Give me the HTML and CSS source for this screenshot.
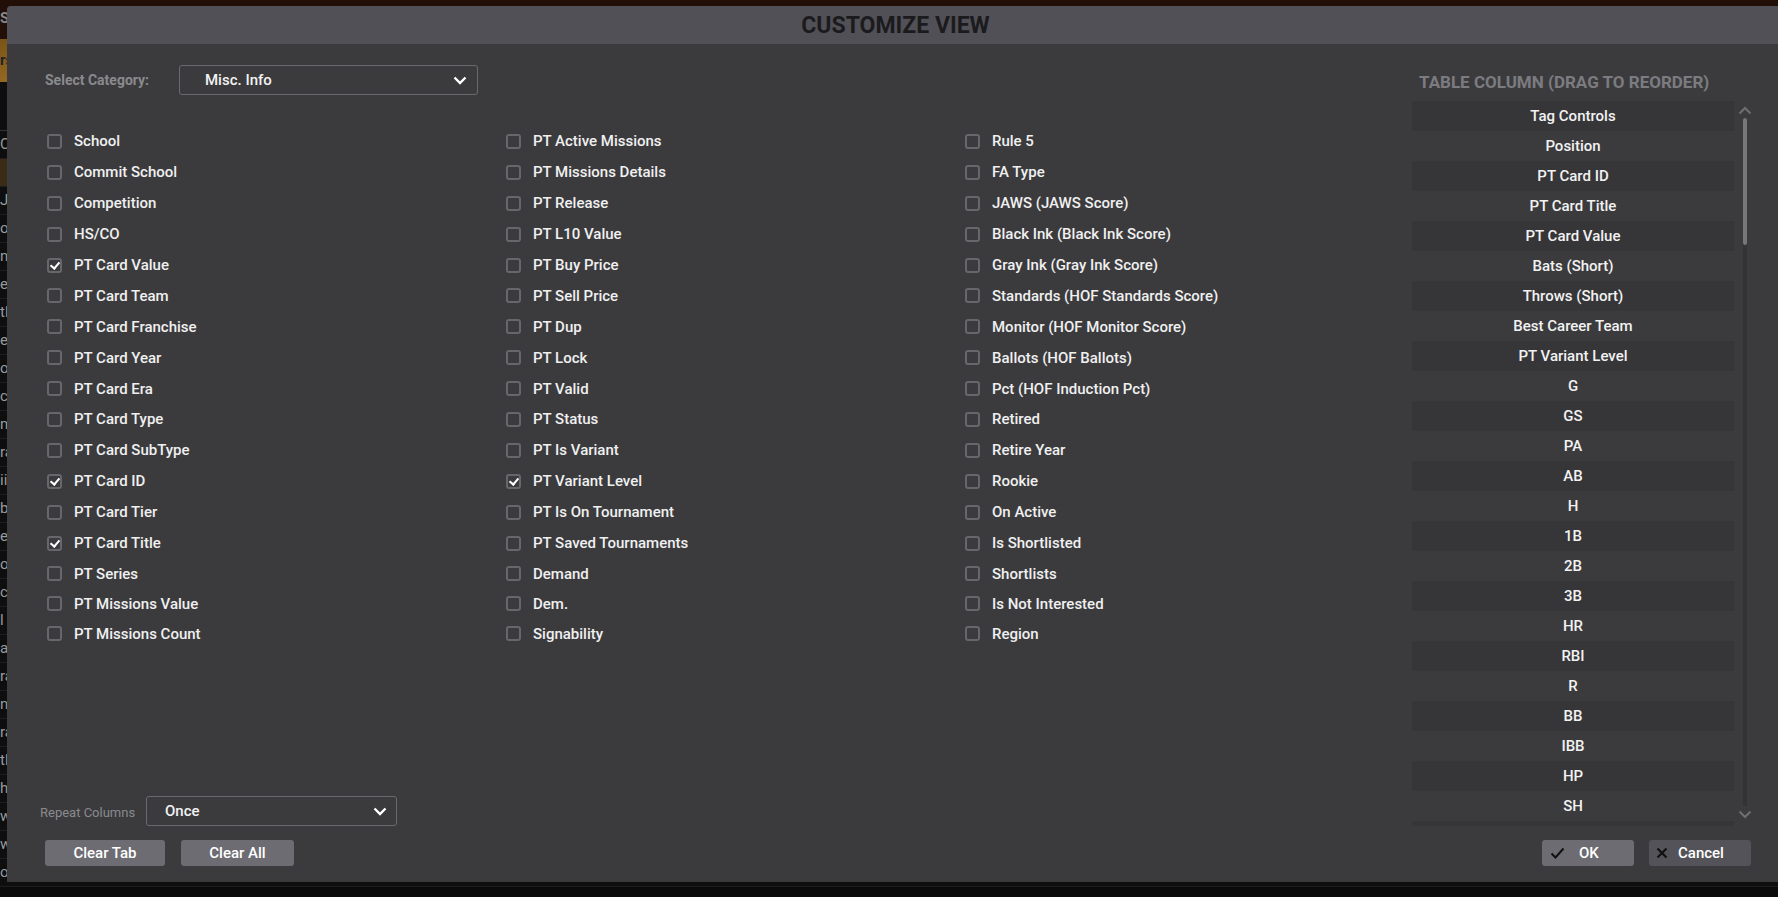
FILE: index.html
```html
<!DOCTYPE html>
<html lang="en">
<head>
    <meta charset="UTF-8">
    <title>Customize View</title>
    <link rel="stylesheet" href="styles.css">
</head>
<body>
    <div class="app">
        <div class="app-top">Stats</div>
        <div class="app-band">rs</div>
        <div class="app-gap"></div>
        <div class="app-row">Co</div>
        <div class="app-row sel"></div>
        <div class="app-row">Ju</div>
        <div class="app-row">o</div>
        <div class="app-row">nn</div>
        <div class="app-row">e</div>
        <div class="app-row">tl</div>
        <div class="app-row">e</div>
        <div class="app-row">o</div>
        <div class="app-row">c</div>
        <div class="app-row">m</div>
        <div class="app-row">ra</div>
        <div class="app-row">ii</div>
        <div class="app-row">b</div>
        <div class="app-row">e</div>
        <div class="app-row">or</div>
        <div class="app-row">c</div>
        <div class="app-row">l</div>
        <div class="app-row">a</div>
        <div class="app-row">ra</div>
        <div class="app-row">nt</div>
        <div class="app-row">ra</div>
        <div class="app-row">tl</div>
        <div class="app-row">h</div>
        <div class="app-row">w</div>
        <div class="app-row">w</div>
        <div class="app-row">o</div>
    </div>

    <div class="dialog">
        <div class="dialog-title">CUSTOMIZE VIEW</div>
        <div class="dialog-body">
            <div class="main">
                <div class="category-row">
                    <span class="category-label">Select Category:</span>
                    <div class="select category-select">
                        <span>Misc. Info</span>
                        <svg class="chev" width="14" height="9" viewBox="0 0 14 9"><path d="M1.5 1.5 L7 7 L12.5 1.5" fill="none" stroke="#fff" stroke-width="2.4"/></svg>
                    </div>
                </div>

                <div class="check-grid">
                    <label class="check"><span class="box"></span>School</label>
                    <label class="check"><span class="box"></span>Commit School</label>
                    <label class="check"><span class="box"></span>Competition</label>
                    <label class="check"><span class="box"></span>HS/CO</label>
                    <label class="check"><span class="box on"></span>PT Card Value</label>
                    <label class="check"><span class="box"></span>PT Card Team</label>
                    <label class="check"><span class="box"></span>PT Card Franchise</label>
                    <label class="check"><span class="box"></span>PT Card Year</label>
                    <label class="check"><span class="box"></span>PT Card Era</label>
                    <label class="check"><span class="box"></span>PT Card Type</label>
                    <label class="check"><span class="box"></span>PT Card SubType</label>
                    <label class="check"><span class="box on"></span>PT Card ID</label>
                    <label class="check"><span class="box"></span>PT Card Tier</label>
                    <label class="check"><span class="box on"></span>PT Card Title</label>
                    <label class="check"><span class="box"></span>PT Series</label>
                    <label class="check"><span class="box"></span>PT Missions Value</label>
                    <label class="check"><span class="box"></span>PT Missions Count</label>

                    <label class="check"><span class="box"></span>PT Active Missions</label>
                    <label class="check"><span class="box"></span>PT Missions Details</label>
                    <label class="check"><span class="box"></span>PT Release</label>
                    <label class="check"><span class="box"></span>PT L10 Value</label>
                    <label class="check"><span class="box"></span>PT Buy Price</label>
                    <label class="check"><span class="box"></span>PT Sell Price</label>
                    <label class="check"><span class="box"></span>PT Dup</label>
                    <label class="check"><span class="box"></span>PT Lock</label>
                    <label class="check"><span class="box"></span>PT Valid</label>
                    <label class="check"><span class="box"></span>PT Status</label>
                    <label class="check"><span class="box"></span>PT Is Variant</label>
                    <label class="check"><span class="box on"></span>PT Variant Level</label>
                    <label class="check"><span class="box"></span>PT Is On Tournament</label>
                    <label class="check"><span class="box"></span>PT Saved Tournaments</label>
                    <label class="check"><span class="box"></span>Demand</label>
                    <label class="check"><span class="box"></span>Dem.</label>
                    <label class="check"><span class="box"></span>Signability</label>

                    <label class="check"><span class="box"></span>Rule 5</label>
                    <label class="check"><span class="box"></span>FA Type</label>
                    <label class="check"><span class="box"></span>JAWS (JAWS Score)</label>
                    <label class="check"><span class="box"></span>Black Ink (Black Ink Score)</label>
                    <label class="check"><span class="box"></span>Gray Ink (Gray Ink Score)</label>
                    <label class="check"><span class="box"></span>Standards (HOF Standards Score)</label>
                    <label class="check"><span class="box"></span>Monitor (HOF Monitor Score)</label>
                    <label class="check"><span class="box"></span>Ballots (HOF Ballots)</label>
                    <label class="check"><span class="box"></span>Pct (HOF Induction Pct)</label>
                    <label class="check"><span class="box"></span>Retired</label>
                    <label class="check"><span class="box"></span>Retire Year</label>
                    <label class="check"><span class="box"></span>Rookie</label>
                    <label class="check"><span class="box"></span>On Active</label>
                    <label class="check"><span class="box"></span>Is Shortlisted</label>
                    <label class="check"><span class="box"></span>Shortlists</label>
                    <label class="check"><span class="box"></span>Is Not Interested</label>
                    <label class="check"><span class="box"></span>Region</label>
                </div>

                <div class="bottom">
                    <div class="repeat-row">
                        <span class="repeat-label">Repeat Columns</span>
                        <div class="select repeat-select">
                            <span>Once</span>
                            <svg class="chev" width="14" height="9" viewBox="0 0 14 9"><path d="M1.5 1.5 L7 7 L12.5 1.5" fill="none" stroke="#fff" stroke-width="2.4"/></svg>
                        </div>
                    </div>
                    <div class="button-row">
                        <button class="btn clear-tab">Clear Tab</button>
                        <button class="btn clear-all">Clear All</button>
                    </div>
                </div>
            </div>

            <div class="side">
                <div class="side-title">TABLE COLUMN (DRAG TO REORDER)</div>
                <div class="list-wrap">
                    <div class="col-list">
                        <div class="col-item">Tag Controls</div>
                        <div class="col-item">Position</div>
                        <div class="col-item">PT Card ID</div>
                        <div class="col-item">PT Card Title</div>
                        <div class="col-item">PT Card Value</div>
                        <div class="col-item">Bats (Short)</div>
                        <div class="col-item">Throws (Short)</div>
                        <div class="col-item">Best Career Team</div>
                        <div class="col-item">PT Variant Level</div>
                        <div class="col-item">G</div>
                        <div class="col-item">GS</div>
                        <div class="col-item">PA</div>
                        <div class="col-item">AB</div>
                        <div class="col-item">H</div>
                        <div class="col-item">1B</div>
                        <div class="col-item">2B</div>
                        <div class="col-item">3B</div>
                        <div class="col-item">HR</div>
                        <div class="col-item">RBI</div>
                        <div class="col-item">R</div>
                        <div class="col-item">BB</div>
                        <div class="col-item">IBB</div>
                        <div class="col-item">HP</div>
                        <div class="col-item">SH</div>
                        <div class="col-item"></div>
                    </div>
                    <div class="scrollbar">
                        <svg class="arrow" width="14" height="9" viewBox="0 0 14 9"><path d="M1.5 7.5 L7 2 L12.5 7.5" fill="none" stroke="#6f6f73" stroke-width="2"/></svg>
                        <div class="track"><div class="thumb"></div></div>
                        <svg class="arrow" width="14" height="9" viewBox="0 0 14 9"><path d="M1.5 1.5 L7 7 L12.5 1.5" fill="none" stroke="#6f6f73" stroke-width="2"/></svg>
                    </div>
                </div>
                <div class="button-row right">
                    <button class="btn ok">
                        <svg width="15" height="12" viewBox="0 0 15 12"><path d="M1.5 6.5 L5.5 10.5 L13.5 1.5" fill="none" stroke="#111" stroke-width="2"/></svg>
                        <span>OK</span>
                    </button>
                    <button class="btn cancel">
                        <svg width="12" height="12" viewBox="0 0 12 12"><path d="M1.5 1.5 L10.5 10.5 M10.5 1.5 L1.5 10.5" fill="none" stroke="#111" stroke-width="2.2"/></svg>
                        <span>Cancel</span>
                    </button>
                </div>
            </div>
        </div>
    </div>
</body>
</html>
```

FILE: styles.css
```css
body {
    margin: 0;
    background-color: #0b0b0b;
    font-family: Roboto, "Liberation Sans", sans-serif;
    overflow: hidden;
    height: 897px;
}

/* app behind the modal */
.app {
    width: 100%;
    color: #9a9a9a;
    font-size: 15px;
}
.app-top {
    height: 39px;
    background: #221008;
    line-height: 36px;
    font-weight: bold;
    color: #888;
}
.app-band {
    height: 43px;
    background: linear-gradient(#7a5418, #946822);
    line-height: 43px;
    font-weight: bold;
    color: #222;
}
.app-gap {
    height: 48px;
    background: #0e0e0e;
    border-bottom: 1px solid #333;
}
.app-row {
    height: 27px;
    line-height: 27px;
    border-bottom: 1px solid #1d1d1d;
    background: #0e0e0e;
}
.app-row.sel {
    background: #3a2c14;
}

/* modal */
.dialog {
    position: absolute;
    left: 7px;
    top: 6px;
    right: 0;
    height: 876px;
    background: #3b3b3e;
    display: flex;
    flex-direction: column;
    border-top-left-radius: 4px;
}
.dialog-title {
    height: 38px;
    background: #515057;
    color: #1b1b1d;
    font-size: 23px;
    font-weight: bold;
    text-align: center;
    line-height: 39px;
    padding-left: 6px;
    border-top-left-radius: 4px;
}
.dialog-body {
    flex: 1;
    display: flex;
}

.main {
    width: 1405px;
    padding-left: 38px;
    box-sizing: border-box;
    display: flex;
    flex-direction: column;
}
.category-row {
    margin-top: 21px;
    display: flex;
    align-items: center;
    height: 30px;
}
.category-label {
    width: 134px;
    color: #8a8a8d;
    font-size: 14px;
    font-weight: bold;
}
.select {
    box-sizing: border-box;
    border: 1px solid #6a6a6e;
    border-radius: 3px;
    display: flex;
    align-items: center;
    justify-content: space-between;
    color: #f2f2f2;
    font-size: 15px;
    font-weight: 500;
}
.category-select {
    width: 299px;
    height: 30px;
    padding: 0 10px 0 25px;
}

.check-grid {
    margin-top: 31px;
    padding-left: 2px;
    display: grid;
    grid-auto-flow: column;
    grid-template-rows: repeat(14, 30.9px) repeat(3, 30.2px);
    grid-template-columns: repeat(3, 459px);
}
.check {
    display: flex;
    align-items: center;
    gap: 12px;
    color: #f0f0f0;
    font-size: 15px;
    font-weight: 500;
}
.box {
    width: 15px;
    height: 15px;
    box-sizing: border-box;
    border: 2px solid #67676b;
    border-radius: 3px;
    position: relative;
}
.box.on::after {
    content: "";
    position: absolute;
    left: 3px;
    top: 0px;
    width: 4px;
    height: 7px;
    border-right: 2px solid #fff;
    border-bottom: 2px solid #fff;
    transform: rotate(40deg);
}

.bottom {
    margin-top: auto;
    padding-bottom: 16px;
}
.repeat-row {
    display: flex;
    align-items: center;
    margin-left: -5px;
}
.repeat-label {
    width: 106px;
    color: #8a8a8d;
    font-size: 13px;
    padding-top: 2px;
}
.repeat-select {
    width: 251px;
    height: 30px;
    padding: 0 9px 0 18px;
}
.button-row {
    margin-top: 14px;
    display: flex;
    gap: 16px;
}
.btn {
    height: 26px;
    border: none;
    border-radius: 3px;
    background: #6d6c72;
    color: #fff;
    font-family: Roboto, "Liberation Sans", sans-serif;
    font-size: 15px;
    font-weight: 500;
    display: flex;
    align-items: center;
    justify-content: center;
    padding: 0;
}
.clear-tab {
    width: 120px;
}
.clear-all {
    width: 113px;
}

/* right panel */
.side {
    flex: 1;
    display: flex;
    flex-direction: column;
    padding-bottom: 16px;
}
.side-title {
    margin-top: 28px;
    padding-left: 7px;
    height: 20px;
    line-height: 20px;
    color: #7c7c80;
    font-size: 17px;
    font-weight: bold;
}
.list-wrap {
    margin-top: 9px;
    height: 725px;
    display: flex;
}
.col-list {
    width: 322px;
    overflow: hidden;
}
.col-item {
    height: 30px;
    line-height: 30px;
    text-align: center;
    color: #f2f2f2;
    font-size: 15px;
    font-weight: 500;
}
.col-item:nth-child(odd) {
    background: #363639;
}
.scrollbar {
    width: 22px;
    display: flex;
    flex-direction: column;
    align-items: center;
    padding-top: 5px;
    box-sizing: border-box;
    height: 718px;
}
.track {
    flex: 1;
    width: 4px;
    margin: 3px 0 4px;
    background: #333336;
}
.thumb {
    height: 127px;
    background: #77777a;
    border-radius: 2px;
}
.button-row.right {
    justify-content: flex-end;
    gap: 15px;
    padding-right: 27px;
    margin-top: auto;
}
.ok {
    width: 92px;
    justify-content: flex-start;
    padding-left: 8px;
    gap: 14px;
}
.cancel {
    width: 102px;
    background: #545359;
    justify-content: flex-start;
    padding-left: 7px;
    gap: 10px;
}
```
